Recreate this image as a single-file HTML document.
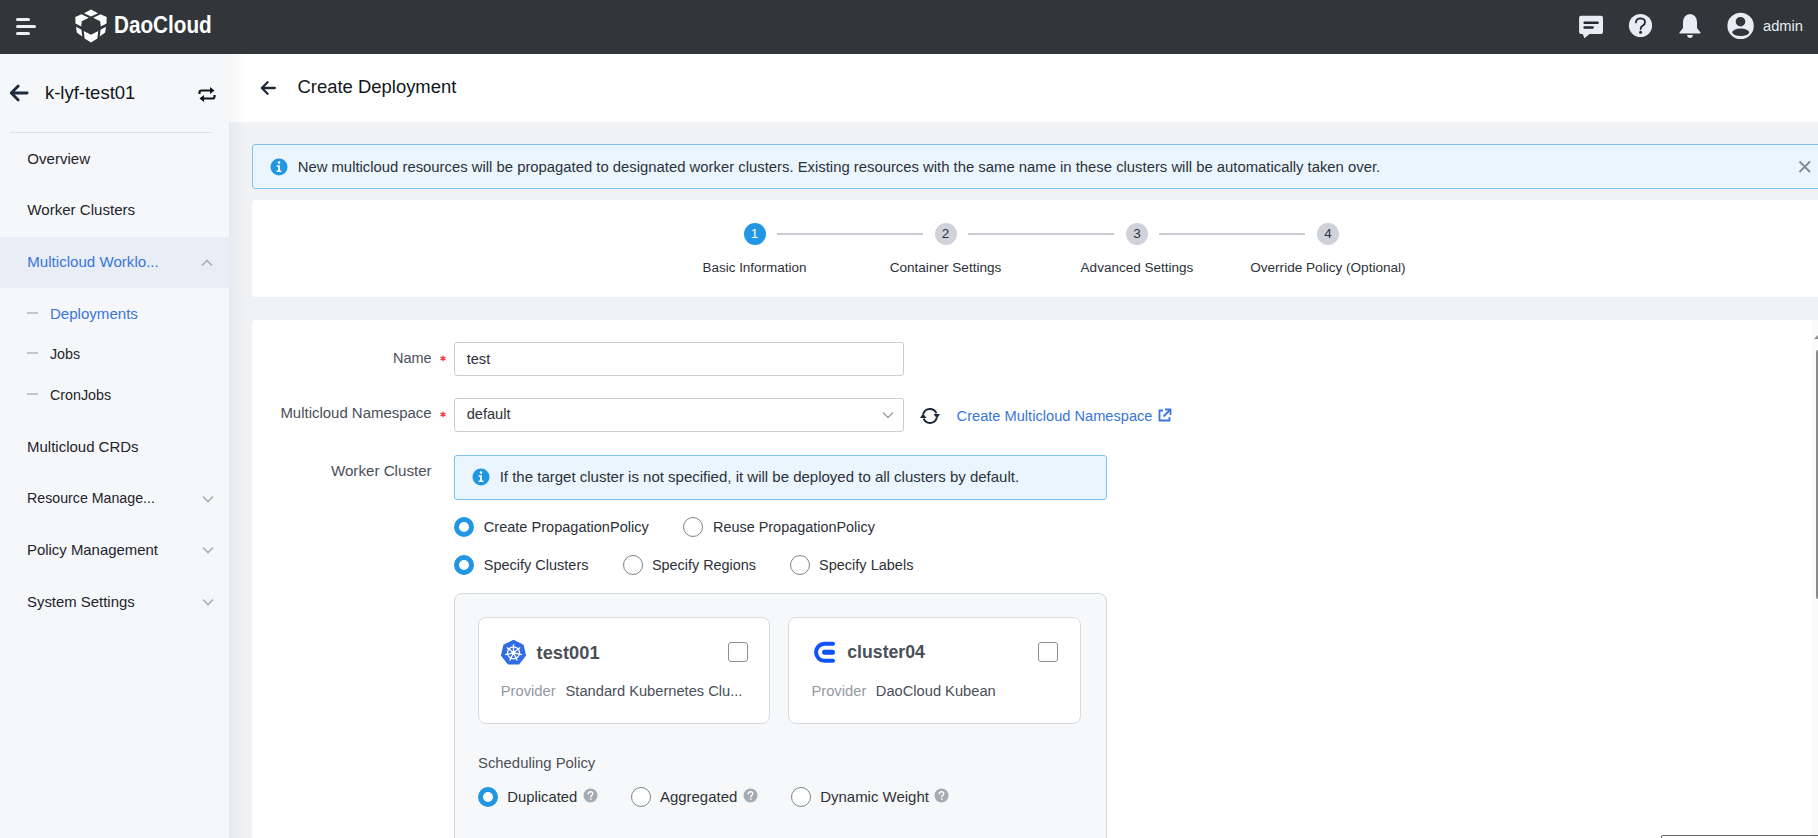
<!DOCTYPE html>
<html><head><meta charset="utf-8"><title>Create Deployment</title>
<style>
html,body{margin:0;padding:0;width:1818px;height:838px;overflow:hidden;background:#f1f2f5}
.t{position:absolute;white-space:nowrap;font-family:"Liberation Sans", sans-serif}
.b{position:absolute;display:block}
</style></head><body>
<div class="b" style="left:0px;top:0px;width:1818px;height:838px;background:#f1f2f5"></div><div class="b" style="left:0px;top:0px;width:1818px;height:54px;background:#323539"></div><div class="b" style="left:0px;top:54px;width:229px;height:784px;background:#f5f7fb"></div><div class="b" style="left:229px;top:54px;width:1589px;height:68px;background:#ffffff"></div><div class="b" style="left:229px;top:54px;width:16px;height:784px;background:linear-gradient(to right,rgba(20,30,60,0.04),rgba(20,30,60,0))"></div><div class="b" style="left:16px;top:18px;width:14px;height:3px;background:#eef1f6;border-radius:2px"></div><div class="b" style="left:16px;top:24.5px;width:20px;height:3.0px;background:#eef1f6;border-radius:2px"></div><div class="b" style="left:16px;top:32px;width:14px;height:3px;background:#eef1f6;border-radius:2px"></div><svg class="b" style="left:75px;top:9px" width="32" height="34" viewBox="0 0 32 34"><g fill="#fff">
<path d="M16 0.5 L23 4.2 L16 7.6 L9 4.2 Z"/>
<path d="M6.5 5.2 L13.8 8.8 L6.8 12.2 L6.2 17.6 L0.5 14.6 L0.3 7.9 Z"/>
<path d="M25.5 5.2 L31.7 7.9 L31.5 14.6 L25.8 17.6 L25.2 12.2 L18.2 8.8 Z"/>
<path d="M1 17.8 L6.5 20.8 L7.2 27.6 L1.8 23.4 Z"/>
<path d="M31 17.8 L30.2 23.4 L24.8 27.6 L25.5 20.8 Z"/>
<path d="M8.8 22 L16 25.8 L23.2 22 L22.4 29.6 L16 33.5 L9.6 29.6 Z"/>
</g></svg><div class="t" style="left:113.5px;top:12.56px;font-size:24.5px;line-height:24.5px;color:#ffffff;font-weight:700;transform:scaleX(0.845);transform-origin:0 0;">DaoCloud</div><svg class="b" style="left:1578px;top:15px" width="26" height="24" viewBox="0 0 26 24"><path d="M3 0.7 H23 Q25 0.7 25 2.7 V17 Q25 19 23 19 H11.6 L6.4 23.2 L4.7 19 H3 Q1.1 19 1.1 17 V2.7 Q1.1 0.7 3 0.7 Z" fill="#e8ecf4"/>
<rect x="5.4" y="6.4" width="15.4" height="2.5" rx="1.25" fill="#25282d"/><rect x="5.4" y="11.2" width="10.4" height="2.5" rx="1.25" fill="#25282d"/></svg><svg class="b" style="left:1628px;top:13px" width="25" height="25" viewBox="0 0 25 25"><circle cx="12.5" cy="12.5" r="11.6" fill="#e8ecf4"/>
<path d="M7.9 9.4 Q8.2 5.4 12.7 5.4 Q17 5.6 17 9.2 Q17 11.4 14.6 12.8 Q12.7 13.9 12.7 15.8 V16" fill="none" stroke="#25282d" stroke-width="1.8" stroke-linecap="round"/>
<circle cx="12.6" cy="19.3" r="1.5" fill="#25282d"/></svg><svg class="b" style="left:1678px;top:13px" width="24" height="26" viewBox="0 0 24 26"><path d="M12 1 Q18.5 1.5 19 9 V15 L22.5 19.5 Q23 20.5 22 20.5 H2 Q1 20.5 1.5 19.5 L5 15 V9 Q5.5 1.5 12 1 Z" fill="#e8ecf4"/>
<path d="M9 22 H15 Q14.5 25 12 25 Q9.5 25 9 22 Z" fill="#e8ecf4"/></svg><svg class="b" style="left:1726px;top:12px" width="30" height="30" viewBox="0 0 30 30"><path fill-rule="evenodd" fill="#e8ecf4" d="M14.6 0.7 A13.2 13.2 0 1 1 14.6 27.1 A13.2 13.2 0 1 1 14.6 0.7 Z M14.5 4.9 A4.8 4.8 0 1 0 14.5 14.5 A4.8 4.8 0 1 0 14.5 4.9 Z M14.7 16.6 A8.5 3.75 0 1 0 14.7 24.1 A8.5 3.75 0 1 0 14.7 16.6 Z"/></svg><div class="t" style="left:1763px;top:18.86px;font-size:14.7px;line-height:14.7px;color:#e8ecf4;font-weight:400;">admin</div><svg class="b" style="left:9px;top:84px" width="21" height="18" viewBox="0 0 21 18"><path d="M18.1 9 H2.5 M9.2 2 L2.2 9 L9.2 16" fill="none" stroke="#1e2a3a" stroke-width="2.8" stroke-linecap="round" stroke-linejoin="round"/></svg><div class="t" style="left:44.9px;top:83.54px;font-size:18.5px;line-height:18.5px;color:#121519;font-weight:400;">k-lyf-test01</div><svg class="b" style="left:197px;top:86px" width="20" height="17" viewBox="0 0 20 17"><path d="M2.5 8 V6.5 Q2.5 4.5 4.5 4.5 H16" fill="none" stroke="#121519" stroke-width="2.2"/>
<path d="M13 1 L17.5 4.5 L13 8" fill="#121519"/>
<path d="M17.5 9 V10.5 Q17.5 12.5 15.5 12.5 H4" fill="none" stroke="#121519" stroke-width="2.2"/>
<path d="M7 9 L2.5 12.5 L7 16" fill="#121519"/></svg><div class="b" style="left:10px;top:132px;width:202px;height:1px;background:#dde1e8"></div><div class="t" style="left:27.3px;top:150.94px;font-size:15.07px;line-height:15.07px;color:#1f242c;font-weight:400;">Overview</div><div class="t" style="left:27.3px;top:201.93px;font-size:15.09px;line-height:15.09px;color:#1f242c;font-weight:400;">Worker Clusters</div><div class="b" style="left:0px;top:237px;width:229px;height:51px;background:#e9edf5"></div><div class="t" style="left:27.3px;top:254.22px;font-size:15.1px;line-height:15.1px;color:#3a76d8;font-weight:400;">Multicloud Worklo...</div><svg class="b" style="left:200px;top:256px" width="14" height="12" viewBox="0 0 14 12"><path d="M2 9.5 L7 4.5 L12 9.5" fill="none" stroke="#a8aeb8" stroke-width="1.6"/></svg><div class="b" style="left:27px;top:312px;width:11px;height:2px;background:#c2c7cf"></div><div class="t" style="left:49.9px;top:306.03px;font-size:15.08px;line-height:15.08px;color:#3a76d8;font-weight:400;">Deployments</div><div class="b" style="left:27px;top:352px;width:11px;height:2px;background:#c2c7cf"></div><div class="t" style="left:49.9px;top:347.10px;font-size:14.3px;line-height:14.3px;color:#1f242c;font-weight:400;">Jobs</div><div class="b" style="left:27px;top:393px;width:11px;height:2px;background:#c2c7cf"></div><div class="t" style="left:49.9px;top:387.80px;font-size:14.3px;line-height:14.3px;color:#1f242c;font-weight:400;">CronJobs</div><div class="t" style="left:27px;top:439.11px;font-size:14.99px;line-height:14.99px;color:#1f242c;font-weight:400;">Multicloud CRDs</div><div class="t" style="left:27px;top:491.47px;font-size:14.21px;line-height:14.21px;color:#1f242c;font-weight:400;">Resource Manage...</div><svg class="b" style="left:201px;top:493.5px" width="14" height="10" viewBox="0 0 14 10"><path d="M2 2.5 L7 7.5 L12 2.5" fill="none" stroke="#a8aeb8" stroke-width="1.6"/></svg><div class="t" style="left:27px;top:542.67px;font-size:14.92px;line-height:14.92px;color:#1f242c;font-weight:400;">Policy Management</div><svg class="b" style="left:201px;top:545.3px" width="14" height="10" viewBox="0 0 14 10"><path d="M2 2.5 L7 7.5 L12 2.5" fill="none" stroke="#a8aeb8" stroke-width="1.6"/></svg><div class="t" style="left:27px;top:594.68px;font-size:14.91px;line-height:14.91px;color:#1f242c;font-weight:400;">System Settings</div><svg class="b" style="left:201px;top:597.3px" width="14" height="10" viewBox="0 0 14 10"><path d="M2 2.5 L7 7.5 L12 2.5" fill="none" stroke="#a8aeb8" stroke-width="1.6"/></svg><svg class="b" style="left:259px;top:80px" width="19" height="16" viewBox="0 0 19 16"><path d="M15.8 8 H3 M8.6 2.2 L2.8 8 L8.6 13.8" fill="none" stroke="#1e2a3a" stroke-width="2.3" stroke-linecap="round" stroke-linejoin="round"/></svg><div class="t" style="left:297.5px;top:77.87px;font-size:18.46px;line-height:18.46px;color:#121519;font-weight:400;">Create Deployment</div><div class="b" style="left:252px;top:144px;width:1578px;height:45px;background:#eaf5fd;border:1px solid #7fc4f1;border-radius:3px;box-sizing:border-box"></div><svg class="b" style="left:270px;top:158px" width="18" height="18" viewBox="0 0 18 18"><circle cx="9" cy="9" r="8.5" fill="#2196e3"/><circle cx="9" cy="4.6" r="1.3" fill="#fff"/><path d="M6.6 7.3 H9.9 V12.6 H11.4 V14 H6.6 V12.6 H8.1 V8.7 H6.6 Z" fill="#fff"/></svg><div class="t" style="left:297.7px;top:160.03px;font-size:14.85px;line-height:14.85px;color:#2d3139;font-weight:400;">New multicloud resources will be propagated to designated worker clusters. Existing resources with the same name in these clusters will be automatically taken over.</div><svg class="b" style="left:1798px;top:160px" width="14" height="14" viewBox="0 0 14 14"><path d="M1.5 1.5 L12 12 M12 1.5 L1.5 12" stroke="#868a93" stroke-width="1.9"/></svg><div class="b" style="left:252px;top:200px;width:1578px;height:97px;background:#fff;border-radius:4px"></div><div class="b t" style="left:743.5px;top:223px;width:22px;height:22px;border-radius:50%;background:#2196e3;color:#fff;font-size:13.5px;line-height:22px;text-align:center">1</div><div class="t" style="left:702.5px;top:260.61px;font-size:13.46px;line-height:13.46px;color:#2d3139;font-weight:400;">Basic Information</div><div class="b t" style="left:934.5px;top:223px;width:22px;height:22px;border-radius:50%;background:#cfd2d9;color:#2d3139;font-size:13.5px;line-height:22px;text-align:center">2</div><div class="t" style="left:889.65px;top:260.50px;font-size:13.58px;line-height:13.58px;color:#2d3139;font-weight:400;">Container Settings</div><div class="b t" style="left:1126px;top:223px;width:22px;height:22px;border-radius:50%;background:#cfd2d9;color:#2d3139;font-size:13.5px;line-height:22px;text-align:center">3</div><div class="t" style="left:1080.6px;top:260.55px;font-size:13.53px;line-height:13.53px;color:#2d3139;font-weight:400;">Advanced Settings</div><div class="b t" style="left:1317px;top:223px;width:22px;height:22px;border-radius:50%;background:#cfd2d9;color:#2d3139;font-size:13.5px;line-height:22px;text-align:center">4</div><div class="t" style="left:1250.2px;top:260.50px;font-size:13.59px;line-height:13.59px;color:#2d3139;font-weight:400;">Override Policy (Optional)</div><div class="b" style="left:777px;top:233px;width:146px;height:2px;background:#c8ccd4"></div><div class="b" style="left:968px;top:233px;width:146px;height:2px;background:#c8ccd4"></div><div class="b" style="left:1159px;top:233px;width:146px;height:2px;background:#c8ccd4"></div><div class="b" style="left:252px;top:320px;width:1578px;height:540px;background:#fff;border-radius:4px"></div><div class="t" style="left:393px;top:350.82px;font-size:14.51px;line-height:14.51px;color:#4b505a;font-weight:400;">Name</div><svg class="b" style="left:439px;top:355px" width="8" height="8" viewBox="0 0 8 8"><g stroke="#ee3b43" stroke-width="1.3"><path d="M4 0.8 V6.2 M1.5 2.2 L6.5 4.8 M1.5 4.8 L6.5 2.2"/></g></svg><div class="b" style="left:454px;top:342px;width:450px;height:34px;border:1px solid #c9cdd6;border-radius:3px;box-sizing:border-box;background:#fff"></div><div class="t" style="left:466.7px;top:351.74px;font-size:14.6px;line-height:14.6px;color:#2d3139;font-weight:400;">test</div><div class="t" style="left:280.4px;top:406.14px;font-size:14.96px;line-height:14.96px;color:#4b505a;font-weight:400;">Multicloud Namespace</div><svg class="b" style="left:439px;top:411px" width="8" height="8" viewBox="0 0 8 8"><g stroke="#ee3b43" stroke-width="1.3"><path d="M4 0.8 V6.2 M1.5 2.2 L6.5 4.8 M1.5 4.8 L6.5 2.2"/></g></svg><div class="b" style="left:454px;top:398px;width:450px;height:34px;border:1px solid #c9cdd6;border-radius:3px;box-sizing:border-box;background:#fff"></div><div class="t" style="left:466.7px;top:407.14px;font-size:14.6px;line-height:14.6px;color:#2d3139;font-weight:400;">default</div><svg class="b" style="left:881px;top:410px" width="14" height="10" viewBox="0 0 14 10"><path d="M2 2.5 L7 7.5 L12 2.5" fill="none" stroke="#9aa0ab" stroke-width="1.4"/></svg><svg class="b" style="left:919px;top:406px" width="22" height="20" viewBox="0 0 22 20"><path d="M4.2 8.2 A7 7 0 0 1 17.4 7.4" fill="none" stroke="#1e2a3a" stroke-width="2"/>
<path d="M17.8 11.8 A7 7 0 0 1 4.6 12.6" fill="none" stroke="#1e2a3a" stroke-width="2"/>
<path d="M14.5 8 L21 8 L18 12.5 Z" fill="#1e2a3a"/><path d="M7.5 12 L1 12 L4 7.5 Z" fill="#1e2a3a"/></svg><div class="t" style="left:956.6px;top:409.12px;font-size:14.63px;line-height:14.63px;color:#3a76d8;font-weight:400;">Create Multicloud Namespace</div><svg class="b" style="left:1157px;top:408px" width="16" height="15" viewBox="0 0 16 15"><path d="M6 2.5 H2.5 V12.5 H12.5 V9" fill="none" stroke="#3a76d8" stroke-width="1.8"/><path d="M8 1.5 H13.5 V7" fill="none" stroke="#3a76d8" stroke-width="1.8"/><path d="M13 2 L6.5 8.5" stroke="#3a76d8" stroke-width="1.8"/></svg><div class="t" style="left:330.9px;top:463.37px;font-size:15.16px;line-height:15.16px;color:#4b505a;font-weight:400;">Worker Cluster</div><div class="b" style="left:454px;top:455px;width:653px;height:45px;background:#eaf5fd;border:1px solid #7fc4f1;border-radius:3px;box-sizing:border-box"></div><svg class="b" style="left:472px;top:468px" width="18" height="18" viewBox="0 0 18 18"><circle cx="9" cy="9" r="8.5" fill="#2196e3"/><circle cx="9" cy="4.6" r="1.3" fill="#fff"/><path d="M6.6 7.3 H9.9 V12.6 H11.4 V14 H6.6 V12.6 H8.1 V8.7 H6.6 Z" fill="#fff"/></svg><div class="t" style="left:499.7px;top:469.10px;font-size:15.0px;line-height:15.0px;color:#2d3139;font-weight:400;">If the target cluster is not specified, it will be deployed to all clusters by default.</div><div class="b" style="left:454px;top:517px;width:20px;height:20px;border-radius:50%;box-sizing:border-box;border:5.5px solid #2196e3;background:#fff"></div><div class="t" style="left:483.8px;top:519.88px;font-size:14.55px;line-height:14.55px;color:#2d3139;font-weight:400;">Create PropagationPolicy</div><div class="b" style="left:683px;top:517px;width:20px;height:20px;border-radius:50%;box-sizing:border-box;border:1px solid #7d828c;background:#fff"></div><div class="t" style="left:713px;top:519.99px;font-size:14.43px;line-height:14.43px;color:#2d3139;font-weight:400;">Reuse PropagationPolicy</div><div class="b" style="left:454px;top:555px;width:20px;height:20px;border-radius:50%;box-sizing:border-box;border:5.5px solid #2196e3;background:#fff"></div><div class="t" style="left:483.8px;top:557.93px;font-size:14.49px;line-height:14.49px;color:#2d3139;font-weight:400;">Specify Clusters</div><div class="b" style="left:623px;top:555px;width:20px;height:20px;border-radius:50%;box-sizing:border-box;border:1px solid #7d828c;background:#fff"></div><div class="t" style="left:652px;top:558.02px;font-size:14.39px;line-height:14.39px;color:#2d3139;font-weight:400;">Specify Regions</div><div class="b" style="left:790px;top:555px;width:20px;height:20px;border-radius:50%;box-sizing:border-box;border:1px solid #7d828c;background:#fff"></div><div class="t" style="left:819px;top:557.90px;font-size:14.53px;line-height:14.53px;color:#2d3139;font-weight:400;">Specify Labels</div><div class="b" style="left:454px;top:593px;width:653px;height:267px;background:#f7f8fa;border:1px solid #d5d8df;border-radius:8px;box-sizing:border-box"></div><div class="b" style="left:478px;top:617px;width:292px;height:107px;background:#fff;border:1px solid #d8dbe2;border-radius:8px;box-sizing:border-box"></div><div class="b" style="left:788px;top:617px;width:293px;height:107px;background:#fff;border:1px solid #d8dbe2;border-radius:8px;box-sizing:border-box"></div><svg class="b" style="left:500px;top:639px" width="27" height="27" viewBox="0 0 27 27"><path d="M13.5 0.8 L23.6 5.7 L26.1 16.6 L19.1 25.4 H7.9 L0.9 16.6 L3.4 5.7 Z" fill="#326ce5"/>
<g stroke="#fff" fill="none" stroke-width="1.3"><circle cx="13.5" cy="13.8" r="6"/><circle cx="13.5" cy="13.8" r="1.4" fill="#fff"/>
<path d="M13.5 13.8 L13.50 5.20 M13.5 13.8 L20.22 8.44 M13.5 13.8 L21.88 15.71 M13.5 13.8 L17.23 21.55 M13.5 13.8 L9.77 21.55 M13.5 13.8 L5.12 15.71 M13.5 13.8 L6.78 8.44"/></g></svg><div class="t" style="left:536.6px;top:643.53px;font-size:18.28px;line-height:18.28px;color:#4b4f57;font-weight:700;">test001</div><div class="b" style="left:728px;top:642px;width:20px;height:20px;border:1px solid #8a8e97;border-radius:3px;box-sizing:border-box;background:#fff"></div><div class="t" style="left:500.7px;top:683.80px;font-size:14.77px;line-height:14.77px;color:#9499a2;font-weight:400;">Provider</div><div class="t" style="left:565.6px;top:683.88px;font-size:14.67px;line-height:14.67px;color:#4b505a;font-weight:400;">Standard Kubernetes Clu...</div><svg class="b" style="left:813px;top:641px" width="23" height="23" viewBox="0 0 23 23"><path d="M20 2.75 H11.6 A8.55 8.55 0 0 0 11.6 19.85 H20" fill="none" stroke="#0f52f6" stroke-width="4" stroke-linecap="round"/><path d="M11.5 11.3 H19.5" stroke="#0f52f6" stroke-width="5" stroke-linecap="round"/></svg><div class="t" style="left:847.3px;top:644.04px;font-size:17.67px;line-height:17.67px;color:#4b4f57;font-weight:700;">cluster04</div><div class="b" style="left:1038px;top:642px;width:20px;height:20px;border:1px solid #8a8e97;border-radius:3px;box-sizing:border-box;background:#fff"></div><div class="t" style="left:811.4px;top:683.80px;font-size:14.77px;line-height:14.77px;color:#9499a2;font-weight:400;">Provider</div><div class="t" style="left:875.8px;top:683.87px;font-size:14.68px;line-height:14.68px;color:#4b505a;font-weight:400;">DaoCloud Kubean</div><div class="t" style="left:478px;top:756.11px;font-size:14.87px;line-height:14.87px;color:#4b505a;font-weight:400;">Scheduling Policy</div><div class="b" style="left:478px;top:787px;width:20px;height:20px;border-radius:50%;box-sizing:border-box;border:5.5px solid #2196e3;background:#fff"></div><div class="t" style="left:507.3px;top:789.76px;font-size:14.81px;line-height:14.81px;color:#2d3139;font-weight:400;">Duplicated</div><svg class="b" style="left:583px;top:788px" width="15" height="15" viewBox="0 0 15 15"><circle cx="7.5" cy="7.5" r="7" fill="#a6aab3"/><path d="M5.3 5.8 Q5.4 3.6 7.6 3.6 Q9.8 3.7 9.8 5.6 Q9.8 6.8 8.5 7.5 Q7.8 7.9 7.8 8.9" fill="none" stroke="#fff" stroke-width="1.4" stroke-linecap="round"/><circle cx="7.8" cy="11.1" r="0.9" fill="#fff"/></svg><div class="b" style="left:631px;top:787px;width:20px;height:20px;border-radius:50%;box-sizing:border-box;border:1px solid #7d828c;background:#fff"></div><div class="t" style="left:660px;top:789.64px;font-size:14.95px;line-height:14.95px;color:#2d3139;font-weight:400;">Aggregated</div><svg class="b" style="left:743px;top:788px" width="15" height="15" viewBox="0 0 15 15"><circle cx="7.5" cy="7.5" r="7" fill="#a6aab3"/><path d="M5.3 5.8 Q5.4 3.6 7.6 3.6 Q9.8 3.7 9.8 5.6 Q9.8 6.8 8.5 7.5 Q7.8 7.9 7.8 8.9" fill="none" stroke="#fff" stroke-width="1.4" stroke-linecap="round"/><circle cx="7.8" cy="11.1" r="0.9" fill="#fff"/></svg><div class="b" style="left:791px;top:787px;width:20px;height:20px;border-radius:50%;box-sizing:border-box;border:1px solid #7d828c;background:#fff"></div><div class="t" style="left:820.2px;top:789.02px;font-size:14.98px;line-height:14.98px;color:#2d3139;font-weight:400;">Dynamic Weight</div><svg class="b" style="left:934px;top:788px" width="15" height="15" viewBox="0 0 15 15"><circle cx="7.5" cy="7.5" r="7" fill="#a6aab3"/><path d="M5.3 5.8 Q5.4 3.6 7.6 3.6 Q9.8 3.7 9.8 5.6 Q9.8 6.8 8.5 7.5 Q7.8 7.9 7.8 8.9" fill="none" stroke="#fff" stroke-width="1.4" stroke-linecap="round"/><circle cx="7.8" cy="11.1" r="0.9" fill="#fff"/></svg><div class="b" style="left:1812px;top:320px;width:6px;height:518px;background:#fafafa"></div><svg class="b" style="left:1814px;top:335px" width="4" height="4" viewBox="0 0 4 4"><path d="M4 0 L0 4 H4 Z" fill="#8a8a8a"/></svg><div class="b" style="left:1816px;top:350px;width:2px;height:249px;background:#8a8a8a;border-radius:2px 0 0 2px"></div><div class="b" style="left:1661px;top:835px;width:169px;height:10px;border:1px solid #666;border-radius:2px"></div>
</body></html>
